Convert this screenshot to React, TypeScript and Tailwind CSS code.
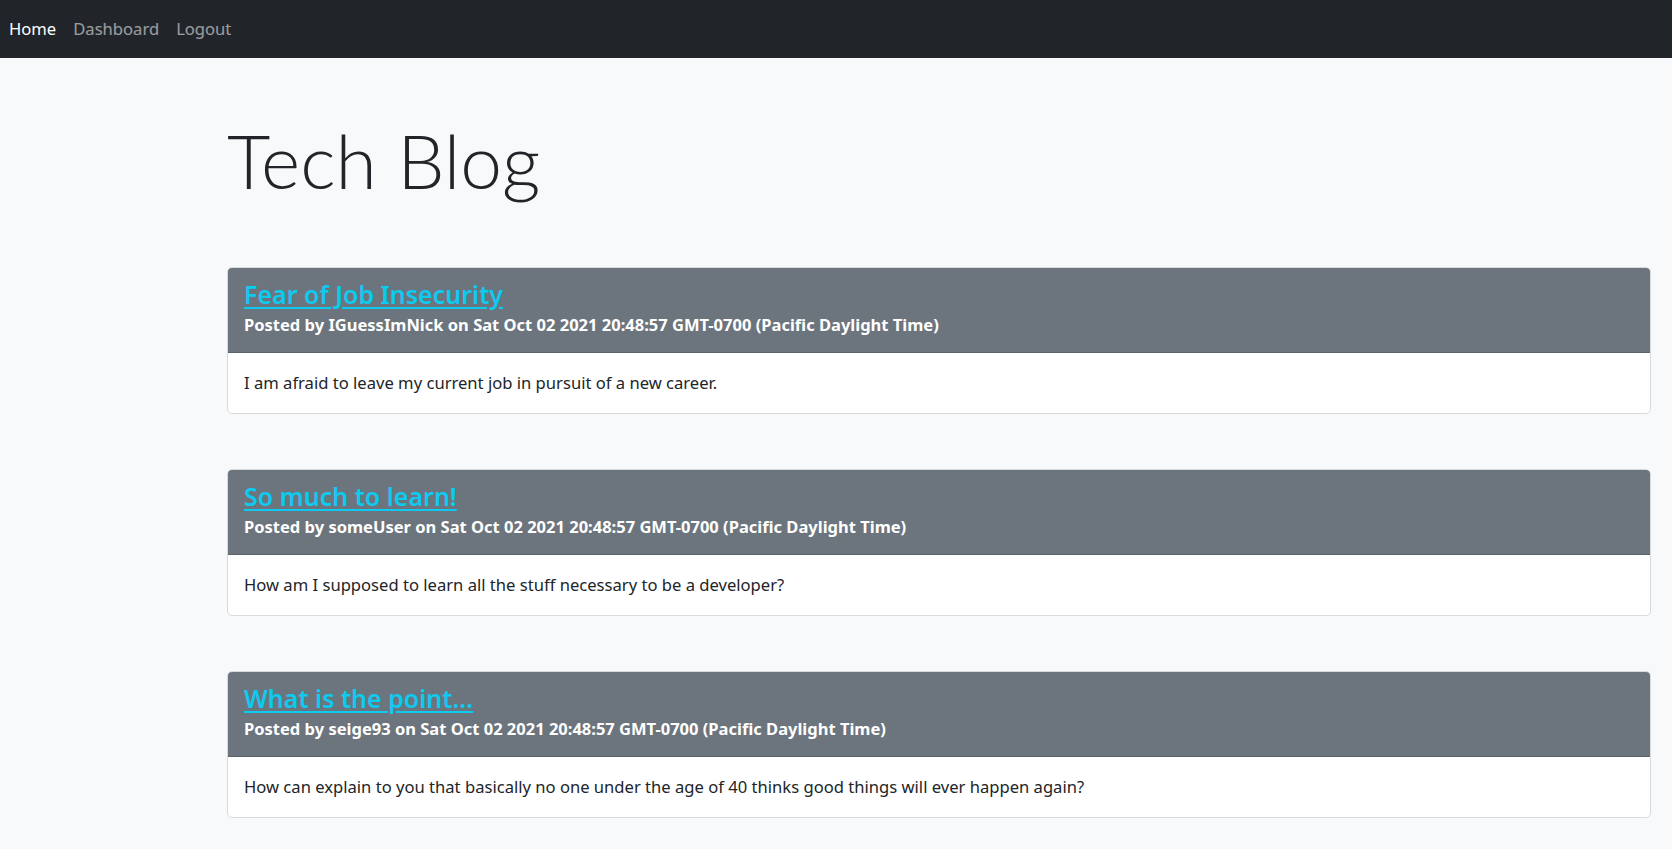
import React from 'react';

interface Post {
    title: string;
    author: string;
    date: string;
    body: string;
}

const posts: Post[] = [
    {
        title: 'Fear of Job Insecurity',
        author: 'IGuessImNick',
        date: 'Sat Oct 02 2021 20:48:57 GMT-0700 (Pacific Daylight Time)',
        body: 'I am afraid to leave my current job in pursuit of a new career.',
    },
    {
        title: 'So much to learn!',
        author: 'someUser',
        date: 'Sat Oct 02 2021 20:48:57 GMT-0700 (Pacific Daylight Time)',
        body: 'How am I supposed to learn all the stuff necessary to be a developer?',
    },
    {
        title: 'What is the point...',
        author: 'seige93',
        date: 'Sat Oct 02 2021 20:48:57 GMT-0700 (Pacific Daylight Time)',
        body: 'How can explain to you that basically no one under the age of 40 thinks good things will ever happen again?',
    },
];

const font = { fontFamily: '"Noto Sans", "Open Sans", sans-serif' };

const PostCard: React.FC<{ post: Post }> = ({ post }) => (
    <div className="bg-white border border-[#d9dadc] rounded-[5px] overflow-hidden">
        <div className="bg-[#6c757d] border-b border-[#5c646b] px-4 pt-[9px] pb-[15px]">
            <a href="#" className="block text-[25px] leading-[34px] font-semibold text-[#0dcaf0] underline underline-offset-[3px]">
                {post.title}
            </a>
            <p className="text-[16.5px] leading-[24px] font-bold text-white mt-[2px]">
                Posted by {post.author} on {post.date}
            </p>
        </div>
        <div className="px-4 py-[17px]">
            <p className="text-[16.6px] leading-[26px] text-[#212529]">{post.body}</p>
        </div>
    </div>
);

const App: React.FC = () => (
    <div className="min-h-[848px] bg-[#f8f9fa]" style={font}>
        <nav className="h-[58px] bg-[#212529] flex items-center px-[9px] gap-[17px] text-[16.6px]">
            <a href="#" className="text-white">Home</a>
            <a href="#" className="text-white/55">Dashboard</a>
            <a href="#" className="text-white/55">Logout</a>
        </nav>
        <main className="pl-[227px] pr-[21px] pb-[31px]">
            <h1
                className="text-[75px] leading-[96px] font-light text-[#212529] pt-[54px] pb-[59px]"
                style={{ fontFamily: 'Lato, "Noto Sans", sans-serif' }}
            >
                Tech Blog
            </h1>
            <div className="flex flex-col gap-[55px]">
                {posts.map((post, index) => (
                    <PostCard key={index} post={post} />
                ))}
            </div>
        </main>
    </div>
);

export default App;
